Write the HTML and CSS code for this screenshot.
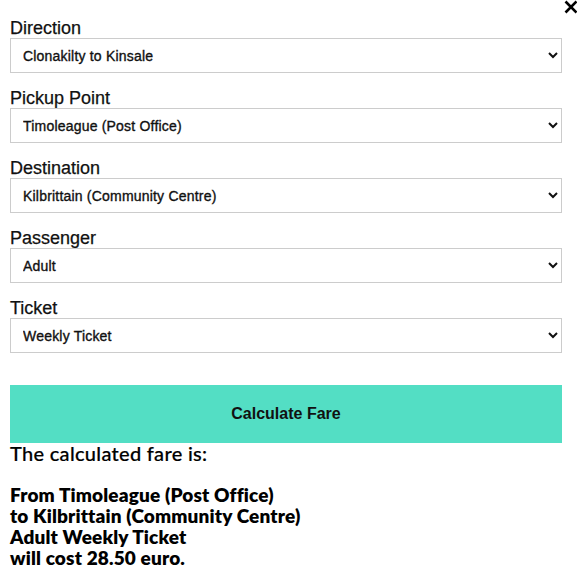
FILE: index.html
```html
<!DOCTYPE html>
<html>
<head>
<meta charset="utf-8">
<link rel="stylesheet" href="styles.css">
</head>
<body>
<div class="close" aria-label="Close">
  <svg width="14" height="14" viewBox="0 0 14 14"><path d="M1.5 1.5 L12.5 12.5 M12.5 1.5 L1.5 12.5" stroke="#000" stroke-width="2.6" stroke-linecap="butt"/></svg>
</div>
<form class="fare-form">
  <div class="field">
    <label class="field-label">Direction</label>
    <select class="field-select"><option>Clonakilty to Kinsale</option></select>
  </div>
  <div class="field">
    <label class="field-label">Pickup Point</label>
    <select class="field-select"><option>Timoleague (Post Office)</option></select>
  </div>
  <div class="field">
    <label class="field-label">Destination</label>
    <select class="field-select"><option>Kilbrittain (Community Centre)</option></select>
  </div>
  <div class="field">
    <label class="field-label">Passenger</label>
    <select class="field-select"><option>Adult</option></select>
  </div>
  <div class="field">
    <label class="field-label">Ticket</label>
    <select class="field-select"><option>Weekly Ticket</option></select>
  </div>
  <button type="button" class="calc-btn">Calculate Fare</button>
</form>
<div class="result">
  <p class="result-intro">The calculated fare is:</p>
  <p class="result-detail">From Timoleague (Post Office)<br>to Kilbrittain (Community Centre)<br>Adult Weekly Ticket<br>will cost 28.50 euro.</p>
</div>
</body>
</html>
```
FILE: styles.css
```css
html, body {
  margin: 0;
  padding: 0;
  background: #fff;
}
body {
  width: 552px;
  padding: 0 15px 0 10px;
  position: relative;
  font-family: "Liberation Sans", Arial, sans-serif;
  color: #000;
}
.close {
  position: absolute;
  top: 0;
  left: 564px;
  width: 14px;
  height: 14px;
}
.close svg { display: block; }
.fare-form {
  padding-top: 18px;
}
.field {
  display: flex;
  flex-direction: column;
  margin-bottom: 15px;
}
.field-label {
  display: block;
  font-size: 18px;
  line-height: 20px;
  height: 20px;
  color: #111;
  -webkit-text-stroke: 0.25px #111;
}
.field-select {
  width: 552px;
  height: 35px;
  margin: 0;
  padding: 0 8px;
  border: 1px solid #ccc;
  background: #fff;
  font-family: "Liberation Sans", Arial, sans-serif;
  font-size: 14px;
  letter-spacing: 0.2px;
  font-weight: normal;
  color: #111;
  -webkit-text-stroke: 0.35px #111;
}
.calc-btn {
  display: block;
  width: 552px;
  height: 58px;
  margin: 32px 0 0 0;
  border: none;
  background: #53dec4;
  font-family: "Liberation Sans", Arial, sans-serif;
  font-size: 16px;
  font-weight: bold;
  color: #111;
}
.result {
  font-family: "Lato", "Open Sans", sans-serif;
  color: #000;
}
.result-intro {
  margin: 0;
  font-size: 20px;
  line-height: 21px;
  font-weight: 500;
  letter-spacing: 0.3px;
  -webkit-text-stroke: 0.2px #000;
}
.result-detail {
  margin: 20px 0 0 0;
  font-size: 19px;
  line-height: 21px;
  letter-spacing: 0.15px;
  font-weight: 800;
}
```
